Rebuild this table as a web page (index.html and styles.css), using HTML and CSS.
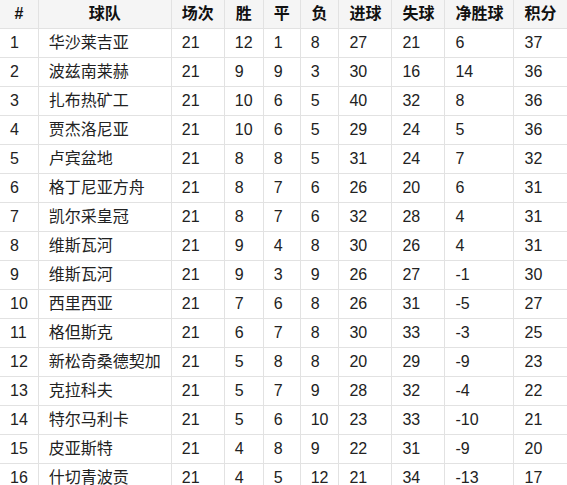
FILE: index.html
```html
<!DOCTYPE html>
<html lang="zh">
<head>
<meta charset="utf-8">
<title>积分榜</title>
<link rel="stylesheet" href="styles.css">
</head>
<body>
<table class="standings">
<thead>
<tr><th>#</th><th>球队</th><th>场次</th><th>胜</th><th>平</th><th>负</th><th>进球</th><th>失球</th><th>净胜球</th><th>积分</th></tr>
</thead>
<tbody>
<tr><td>1</td><td>华沙莱吉亚</td><td>21</td><td>12</td><td>1</td><td>8</td><td>27</td><td>21</td><td>6</td><td>37</td></tr>
<tr><td>2</td><td>波兹南莱赫</td><td>21</td><td>9</td><td>9</td><td>3</td><td>30</td><td>16</td><td>14</td><td>36</td></tr>
<tr><td>3</td><td>扎布热矿工</td><td>21</td><td>10</td><td>6</td><td>5</td><td>40</td><td>32</td><td>8</td><td>36</td></tr>
<tr><td>4</td><td>贾杰洛尼亚</td><td>21</td><td>10</td><td>6</td><td>5</td><td>29</td><td>24</td><td>5</td><td>36</td></tr>
<tr><td>5</td><td>卢宾盆地</td><td>21</td><td>8</td><td>8</td><td>5</td><td>31</td><td>24</td><td>7</td><td>32</td></tr>
<tr><td>6</td><td>格丁尼亚方舟</td><td>21</td><td>8</td><td>7</td><td>6</td><td>26</td><td>20</td><td>6</td><td>31</td></tr>
<tr><td>7</td><td>凯尔采皇冠</td><td>21</td><td>8</td><td>7</td><td>6</td><td>32</td><td>28</td><td>4</td><td>31</td></tr>
<tr><td>8</td><td>维斯瓦河</td><td>21</td><td>9</td><td>4</td><td>8</td><td>30</td><td>26</td><td>4</td><td>31</td></tr>
<tr><td>9</td><td>维斯瓦河</td><td>21</td><td>9</td><td>3</td><td>9</td><td>26</td><td>27</td><td>-1</td><td>30</td></tr>
<tr><td>10</td><td>西里西亚</td><td>21</td><td>7</td><td>6</td><td>8</td><td>26</td><td>31</td><td>-5</td><td>27</td></tr>
<tr><td>11</td><td>格但斯克</td><td>21</td><td>6</td><td>7</td><td>8</td><td>30</td><td>33</td><td>-3</td><td>25</td></tr>
<tr><td>12</td><td>新松奇桑德契加</td><td>21</td><td>5</td><td>8</td><td>8</td><td>20</td><td>29</td><td>-9</td><td>23</td></tr>
<tr><td>13</td><td>克拉科夫</td><td>21</td><td>5</td><td>7</td><td>9</td><td>28</td><td>32</td><td>-4</td><td>22</td></tr>
<tr><td>14</td><td>特尔马利卡</td><td>21</td><td>5</td><td>6</td><td>10</td><td>23</td><td>33</td><td>-10</td><td>21</td></tr>
<tr><td>15</td><td>皮亚斯特</td><td>21</td><td>4</td><td>8</td><td>9</td><td>22</td><td>31</td><td>-9</td><td>20</td></tr>
<tr><td>16</td><td>什切青波贡</td><td>21</td><td>4</td><td>5</td><td>12</td><td>21</td><td>34</td><td>-13</td><td>17</td></tr>
</tbody>
</table>
</body>
</html>
```
FILE: styles.css
```css
html, body {
  margin: 0;
  padding: 0;
  background: #fff;
}
body {
  overflow: hidden;
  font-family: "Liberation Sans", "Noto Sans CJK SC", sans-serif;
  font-size: 16px;
  color: #222;
}
.standings {
  border-collapse: collapse;
  margin: -1px 0 0 -1px;
  white-space: nowrap;
}
.standings th,
.standings td {
  border: 1px solid #e2e2e2;
  padding: 5px 10px;
  line-height: 18px;
  text-align: left;
}
.standings th {
  background: #f5f5f5;
  color: #111;
  font-weight: bold;
  text-align: center;
}
```
